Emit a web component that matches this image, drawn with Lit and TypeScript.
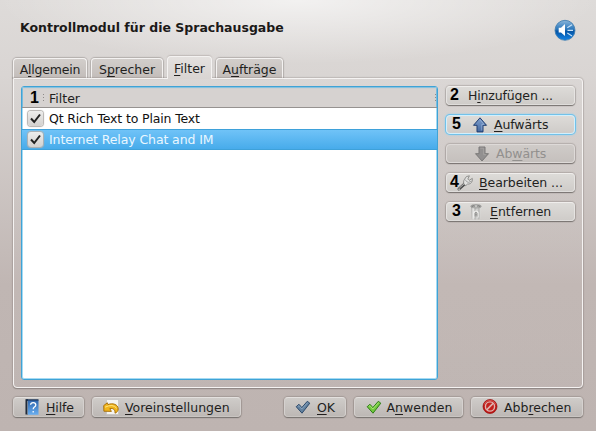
import { LitElement, html, svg, css } from "lit";
import { customElement, property } from "lit/decorators.js";
import { styleMap } from "lit/directives/style-map.js";

const icons: Record<string, unknown> = {
  up: svg`<defs><linearGradient id="u" x2="0" y2="1"><stop stop-color="#7f9fcd"/><stop offset="1" stop-color="#4468a0"/></linearGradient></defs><path d="M8 .8 14.5 8.3H11V14.9H5V8.3H1.5Z" fill="url(#u)" stroke="#1f3d70" stroke-linejoin="round"/><path d="M8 2.8 12 7.4H9.8V13.4" fill="none" stroke="#9db7dc" stroke-width=".7"/>`,
  down: svg`<path d="M5 1H11V7.7H14.5L8 15 1.5 7.7H5Z" fill="#929090" stroke="#7b7978" stroke-linejoin="round"/><path d="M6.2 2.2H9.7V8.7H12" fill="none" stroke="#a9a7a5" stroke-width=".8"/>`,
  wrench: svg`<path d="M2 14 8 8.6" stroke="#4c4c4c" stroke-width="3" stroke-linecap="round"/><path d="M2.6 12.8 8 8" stroke="#c4c4c2" stroke-width="1" stroke-linecap="round"/><path d="M7.3 9.6C6.2 8.2 6.4 5.6 7.6 4.2L9.4 1.6 12.4 .8 10.8 4 12.2 5.4 15.3 3.4 15.2 6C14.4 8.4 12.4 9.4 10.6 9L8.8 10.6Z" fill="#e2e2e0" stroke="#7c7c7a" stroke-width=".8"/><path d="M8.2 4.6 9.6 6.6 11.6 7.4 14.4 6.2" fill="none" stroke="#999" stroke-width=".9"/><path d="M1.9 14.2h.3" stroke="#eee" stroke-width="1.2" stroke-linecap="round"/>`,
  trash: svg`<defs><linearGradient id="t"><stop stop-color="#a2a2a0"/><stop offset=".2" stop-color="#ededeb"/><stop offset=".4" stop-color="#b4b4b2"/><stop offset=".6" stop-color="#d8d8d6"/><stop offset=".8" stop-color="#b4b4b2"/><stop offset="1" stop-color="#dededc"/></linearGradient></defs><path d="M3.2 2.4 3.8 14.9Q8 16.2 12.2 14.9L12.8 2.4Z" fill="url(#t)"/><ellipse cx="8" cy="2.3" rx="5.4" ry="1.7" fill="#c4c4c2" stroke="#8e8e8c" stroke-width=".7"/><path d="M3.6 2.6Q5 1.4 6.8 2.1M9.2 2.1Q11 1.4 12.4 2.6" stroke="#666664" fill="none"/><path d="M6 13.4V8.4Q8 5.6 10 8.4V13.4" fill="none" stroke="#f2f2f0" stroke-width="1.2"/><path d="M7 12.6V9Q8 7.6 9 9V12.6M7 10.8H9" fill="none" stroke="#888886" stroke-width=".8"/>`,
  help: svg`<defs><linearGradient id="h" x2="0" y2="1"><stop stop-color="#2f66ae"/><stop offset="1" stop-color="#69aef0"/></linearGradient></defs><path d="M1.5 .2H4V15.5H1.5Z" fill="#17202e"/><path d="M2 .2H14.5V2H3Z" fill="#1d3557"/><path d="M4 1.5H14.5V15.8H4Z" fill="url(#h)"/><path d="M3.4 2V15.5" stroke="#a9bdd5" stroke-width=".7"/><path d="M6.6 5.8Q6.6 3.6 9.2 3.6 11.8 3.6 11.8 6 11.8 7.3 10.2 8.2 9.2 8.9 9.2 10.3M9.2 12v1.6" fill="none" stroke="#fff" stroke-width="1.3"/>`,
  reset: svg`<path d="M3.5 .5H15.5V15.5H3.5Z" fill="#f4f4f2" stroke="#c2c0bd" stroke-width=".7"/><path d="M.7 6.6 4.3 3.8 5 5.6C9.5 3.6 15.2 5.4 15.2 10 15.2 12 13.8 13.6 12 14.2 12.4 10.8 10.4 8.9 6.8 9.6L8.4 12.4 .9 12.2Z" fill="#f1b51c" stroke="#a36b08" stroke-width=".9" stroke-linejoin="round"/><path d="M2 8.2Q10 4.4 13.7 9.3" fill="none" stroke="#ffe680"/>`,
  ok: svg`<path d="M1.2 7.7 4 5.3 6.8 8.6 12.3 2.3 14.8 4.2 7 14.2Z" fill="#64829f" stroke="#2d4a6b" stroke-linejoin="round"/><path d="M2.8 7.5 4 6.6 6.8 10 12.6 3.6" fill="none" stroke="#91abc4" stroke-width=".8"/>`,
  apply: svg`<path d="M1.2 7.7 4 5.3 6.8 8.6 12.3 2.3 14.8 4.2 7 14.2Z" fill="#72c83e" stroke="#2e7d17" stroke-linejoin="round"/><path d="M2.8 7.5 4 6.6 6.8 10 12.6 3.6" fill="none" stroke="#b6ee83" stroke-width=".8"/>`,
  cancel: svg`<circle cx="8" cy="7.5" r="7" fill="#bd1613" stroke="#980f0e" stroke-width=".7"/><circle cx="8" cy="7.5" r="4.6" fill="#c3211d" stroke="#dfb4b0" stroke-width="1.4"/><path d="M4.9 10.6 11.1 4.4" stroke="#dfb4b0" stroke-width="1.5"/><path d="M2.2 5.6A6.2 6.2 0 0 1 13.8 5.6" fill="none" stroke="#e0625c" stroke-width=".8"/>`,
};

@customElement("push-button")
class PushButton extends LitElement {
  @property() label = "";
  @property() icon = "";
  @property() mark = "";
  @property({ type: Array }) geo: number[] = [];
  @property({ type: Number }) track = 0;
  @property({ type: Boolean }) disabled = false;
  @property({ type: Boolean }) focused = false;
  static styles = css`
    :host { display: block; height: 20px; }
    .btn { box-sizing: border-box; position: relative; height: 19px; display: flex; align-items: center; border-radius: 4px; color: #221f1e;
      background: linear-gradient(#dddbd8, #cfccc9); border: 1px solid; border-color: #f0eeec #e6e4e2 #dfdddb;
      box-shadow: 0 1px 1px #787370, 0 0 1px 1px rgba(100, 94, 90, .28); }
    .low { height: 20px; background: linear-gradient(#cfccc9, #bdb8b5); border-color: #e4e1df #d5d1cf #c9c5c2; }
    .low .text { padding-top: 1px; }
    .focused { border-color: #d2f0fd; box-shadow: 0 0 0 1px #72c1e9, 0 0 2px 1px #8fd2f4; }
    .disabled { color: #92908e; background: linear-gradient(#cfcbc8, #c5c0bd); border-color: #dedad8; }
    svg { width: 16px; height: 16px; flex: none; overflow: visible; }
    .text { white-space: pre; line-height: 17px; }
    u { text-decoration-thickness: 1px; text-underline-offset: 2px; text-decoration-skip-ink: none; }
    .mark { position: absolute; top: -1px; font: bold 16px/18px "Liberation Sans", sans-serif; letter-spacing: 0; color: #000; }
  `;
  render() {
    const [pad, gap, width, markX, low] = this.geo;
    const [a, b, c] = this.label.split("|");
    return html`<div class="btn ${low ? "low" : ""} ${this.focused ? "focused" : ""} ${this.disabled ? "disabled" : ""}" style=${styleMap({ width: `${width}px`, paddingLeft: `${pad}px`, letterSpacing: `${this.track}px` })}>
      ${this.mark ? html`<span class="mark" style=${styleMap({ left: `${markX}px` })}>${this.mark}</span>` : ""}
      ${this.icon ? html`<svg viewBox="0 0 16 16" style=${styleMap({ marginRight: `${gap}px` })}>${icons[this.icon]}</svg>` : ""}
      <span class="text">${a}<u>${b}</u>${c}</span></div>`;
  }
}

@customElement("app-root")
class AppRoot extends LitElement {
  static styles = css`
    :host { display: flex; flex-direction: column; box-sizing: border-box; width: 596px; height: 431px; overflow: hidden; padding: 0 13px;
      font: 12.5px "DejaVu Sans", sans-serif; color: #221f1e;
      background: radial-gradient(ellipse 300px 64px at 298px 0, rgba(255,255,255,.62), rgba(255,255,255,0)), linear-gradient(#dedbd9 0, #d9d5d3 75px, #c0b6b3 285px, #beb4b1 100%); }
    .head { display: flex; justify-content: space-between; height: 57px; flex: none; padding: 0 7px 0 7px; }
    h1 { font-size: 12.5px; line-height: 16px; margin: 20px 0 0; white-space: nowrap; color: #1b1918; }
    .sound { width: 22px; height: 22px; margin-top: 19px; }
    .tabs { display: flex; align-items: flex-end; height: 21px; flex: none; gap: 4px; }
    .tab { box-sizing: border-box; height: 20px; border: 1px solid #f4f2f1; border-bottom: 0; border-radius: 4px 4px 0 0; background: linear-gradient(#d2cecb, #c3bdba);
      box-shadow: 0 0 1px 1px rgba(110,104,100,.35); line-height: 22px; text-align: center; white-space: nowrap; }
    .tab.active { height: 23px; margin-bottom: -1px; position: relative; z-index: 1; background: linear-gradient(#e4e1df, #d8d4d2); box-shadow: 0 -1px 1px rgba(110,104,100,.25); line-height: 24px; }
    u { text-decoration-thickness: 1px; text-underline-offset: 2px; text-decoration-skip-ink: none; }
    .panel { box-sizing: border-box; display: flex; gap: 8px; width: 570px; height: 310px; flex: none; padding: 7px 0 0 7px; border: 1px solid #f5f3f2; border-radius: 0 4px 4px 4px;
      box-shadow: 0 1px 1px #8e8784, 0 0 1px 1px rgba(110,104,100,.25); background: linear-gradient(rgba(255,255,255,.06), rgba(255,255,255,.02)); }
    .list { box-sizing: border-box; width: 417px; height: 294px; border: 1px solid #3fa3d6; border-radius: 3px; background: #fff; box-shadow: inset 0 0 0 1px #a5daf3; overflow: hidden; }
    .lhead { box-sizing: border-box; height: 21px; display: flex; align-items: center; justify-content: space-between; background: #d6d2d0; border-bottom: 1px solid #969290; box-shadow: inset 0 1px 1px #7fbfdf, inset 1px 0 #78bbdd, inset -1px 0 #78bbdd; padding: 2px 1px 0 8px; }
    .lhead div { display: flex; align-items: center; }
    .num { font: bold 16px/18px "Liberation Sans", sans-serif; color: #000; width: 13px; }
    .dots { width: 1px; height: 9px; background: repeating-linear-gradient(#8f8b89 0 1px, transparent 1px 3px); margin-right: 5px; }
    .dots.end { margin: 0; }
    .row { height: 21px; display: flex; align-items: center; padding-left: 6px; gap: 6px; color: #111; letter-spacing: -.15px; }
    .row.sel { color: #eaf7ff; letter-spacing: -.1px; background: linear-gradient(#72c4f8, #45aaea); box-shadow: inset 0 1px #3ea1da, inset 0 -1px #3ea1da; }
    .check { width: 15px; height: 15px; border-radius: 3px; background: linear-gradient(#ededec, #d3d1cf); box-shadow: 0 0 1px 1px #b4b1ae; display: block; }
    .side { display: flex; flex-direction: column; gap: 9px; }
    .foot { display: flex; margin-top: 9px; gap: 8px; }
    .grow { flex: 1; margin: 0 -8px; }
  `;
  row(text: string, sel: boolean) {
    return html`<div class="row ${sel ? "sel" : ""}"><svg class="check" viewBox="0 0 15 15"><path d="M3 7.5 6.2 11 12 3.5" fill="none" stroke="#222" stroke-width="2"/></svg><span>${text}</span></div>`;
  }
  tab(a: string, b: string, c: string, w: number, active = false, track = 0) {
    return html`<div class="tab ${active ? "active" : ""}" style=${styleMap({ width: `${w}px`, letterSpacing: `${track}px` })}>${a}<u>${b}</u>${c}</div>`;
  }
  render() {
    return html`
      <div class="head"><h1>Kontrollmodul für die Sprachausgabe</h1>
        <svg class="sound" viewBox="0 0 22 22"><defs><linearGradient id="s" x2="0" y2="1"><stop stop-color="#8ab6da"/><stop offset=".45" stop-color="#2a76bb"/><stop offset=".55" stop-color="#0756a6"/><stop offset="1" stop-color="#1484e6"/></linearGradient></defs>
          <circle cx="11" cy="11.3" r="10" fill="url(#s)" stroke="#3978ad" stroke-width=".8"/><path d="M4.7 8.7H7L11 5V17L7 13.6H4.7Z" fill="#fff"/><path d="M13.3 8.7 18 5.7M13.5 11.4H19M13.3 14 18 17" stroke="#c7e1f7" stroke-width="1.1"/></svg></div>
      <div class="tabs">${this.tab("A", "l", "lgemein", 74, false, -0.2)}${this.tab("S", "p", "recher", 72)}${this.tab("", "F", "ilter", 45, true)}${this.tab("A", "u", "fträge", 67)}</div>
      <div class="panel">
        <div class="list"><div class="lhead"><div><span class="num">1</span><i class="dots"></i><span>Filter</span></div><i class="dots end"></i></div>
          ${this.row("Qt Rich Text to Plain Text", false)}${this.row("Internet Relay Chat and IM", true)}</div>
        <div class="side">
          <push-button label="H|i|nzufügen ..." mark="2" track="-0.15" .geo=${[21, 0, 129, 3]}></push-button>
          <push-button label="|A|ufwärts" icon="up" mark="5" track="-0.1" focused .geo=${[25, 6, 129, 5]}></push-button>
          <push-button label="Ab|w|ärts" icon="down" track="-0.1" disabled .geo=${[27, 6, 129, 0]}></push-button>
          <push-button label="|B|earbeiten ..." icon="wrench" mark="4" track="-0.05" .geo=${[10, 6, 129, 3]}></push-button>
          <push-button label="|E|ntfernen" icon="trash" mark="3" .geo=${[21, 6, 129, 5]}></push-button>
        </div>
      </div>
      <div class="foot">
        <push-button label="|H|ilfe" icon="help" track="-0.1" .geo=${[10, 6, 71, 0, 1]}></push-button>
        <push-button label="|V|oreinstellungen" icon="reset" .geo=${[10, 6, 149, 0, 1]}></push-button>
        <span class="grow"></span>
        <push-button label="|O|K" icon="ok" track="-0.2" .geo=${[10, 6, 62, 0, 1]}></push-button>
        <push-button label="A|n|wenden" icon="apply" .geo=${[10.5, 5, 109, 0, 1]}></push-button>
        <push-button label="Abb|r|echen" icon="cancel" .geo=${[10, 6, 112, 0, 1]}></push-button>
      </div>`;
  }
}
